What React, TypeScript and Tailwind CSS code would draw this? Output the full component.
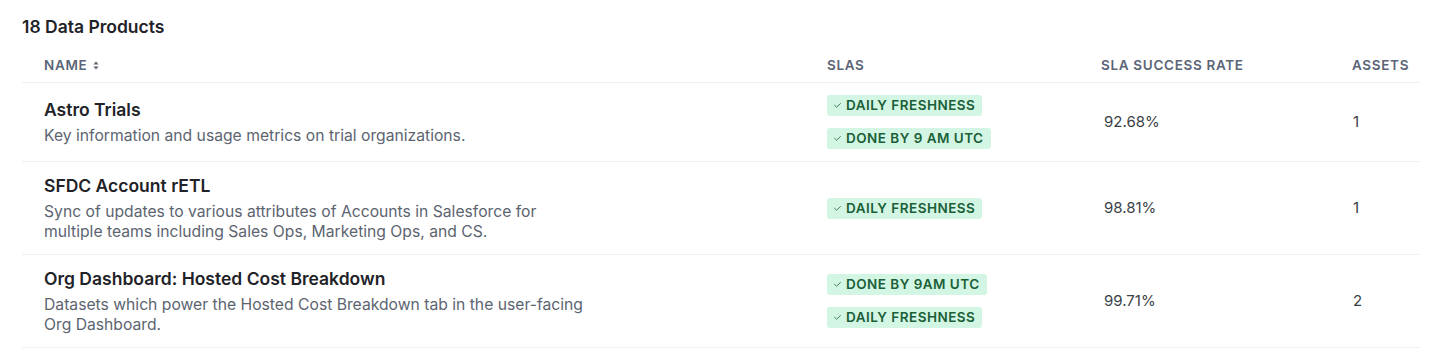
import React from 'react';

// Data products table with SLA badges

interface DataProduct {
  name: string;
  description: string;
  slas: string[];
  successRate: string;
  assets: number;
}

const products: DataProduct[] = [
  {
    name: 'Astro Trials',
    description: 'Key information and usage metrics on trial organizations.',
    slas: ['Daily Freshness', 'Done by 9 AM UTC'],
    successRate: '92.68%',
    assets: 1
  },
  {
    name: 'SFDC Account rETL',
    description:
      'Sync of updates to various attributes of Accounts in Salesforce for multiple teams including Sales Ops, Marketing Ops, and CS.',
    slas: ['Daily Freshness'],
    successRate: '98.81%',
    assets: 1
  },
  {
    name: 'Org Dashboard: Hosted Cost Breakdown',
    description: 'Datasets which power the Hosted Cost Breakdown tab in the user-facing Org Dashboard.',
    slas: ['Done by 9AM UTC', 'Daily Freshness'],
    successRate: '99.71%',
    assets: 2
  }
];

const cols = 'grid grid-cols-[783px_274px_251px_90px]';

function SortIcon() {
  return (
    <svg width="6" height="9" viewBox="0 0 6 9" className="ml-[6px] fill-[#5b6577]">
      <path d="M3 0.5 L5.6 3.6 H0.4 Z" />
      <path d="M3 8.5 L0.4 5.4 H5.6 Z" />
    </svg>
  );
}

function SlaBadge({ label }: { label: string }) {
  return (
    <span className="inline-flex h-[21px] items-center gap-[5px] self-start rounded-[3px] bg-[#d3f5e3] pl-[7px] pr-[7px] text-[13.5px] font-semibold uppercase tracking-[0.035em] text-[#1a5f37]">
      <svg width="7" height="5" viewBox="0 0 7 5" fill="none" className="stroke-[#3f7d57]">
        <polyline points="0.6,2.3 2.6,4.2 6.4,0.6" strokeWidth="1" strokeLinecap="round" strokeLinejoin="round" />
      </svg>
      {label}
    </span>
  );
}

export default function App() {
  return (
    <div className="w-[1430px] bg-white font-['Inter','Liberation_Sans',sans-serif] text-[#1f2328]">
      <div className="pl-[22px] pt-[15px]">
        <h2 className="text-[17.5px] leading-6 font-semibold">18 Data Products</h2>
      </div>

      <div className="ml-[22px] w-[1398px]">
        <div className={`${cols} border-b border-[#edf0f4] pt-[18px] pb-[9px] text-[13.5px] leading-4 font-semibold uppercase tracking-[0.05em] text-[#5b6577]`}>
          <div className="flex items-center pl-[22px]">
            Name
            <SortIcon />
          </div>
          <div className="pl-[22px]">SLAs</div>
          <div className="pl-[22px]">SLA Success Rate</div>
          <div className="pl-[22px]">Assets</div>
        </div>

        {products.map((p) => (
          <div key={p.name} className={`${cols} items-center border-b border-[#edf0f4] py-3`}>
            <div className="pl-[22px]">
              <div className="text-[17.5px] leading-6 font-semibold text-[#1f2328]">{p.name}</div>
              <p className="mt-1 max-w-[548px] text-[15.7px] leading-5 text-[#5c6470]">{p.description}</p>
            </div>
            <div className="flex flex-col gap-3 pl-[22px]">
              {p.slas.map((s) => (
                <SlaBadge key={s} label={s} />
              ))}
            </div>
            <div className="pl-[25px] text-[15px] text-[#3a3f46]">{p.successRate}</div>
            <div className="pl-[23px] text-[15px] text-[#3a3f46]">{p.assets}</div>
          </div>
        ))}
      </div>
    </div>
  );
}
